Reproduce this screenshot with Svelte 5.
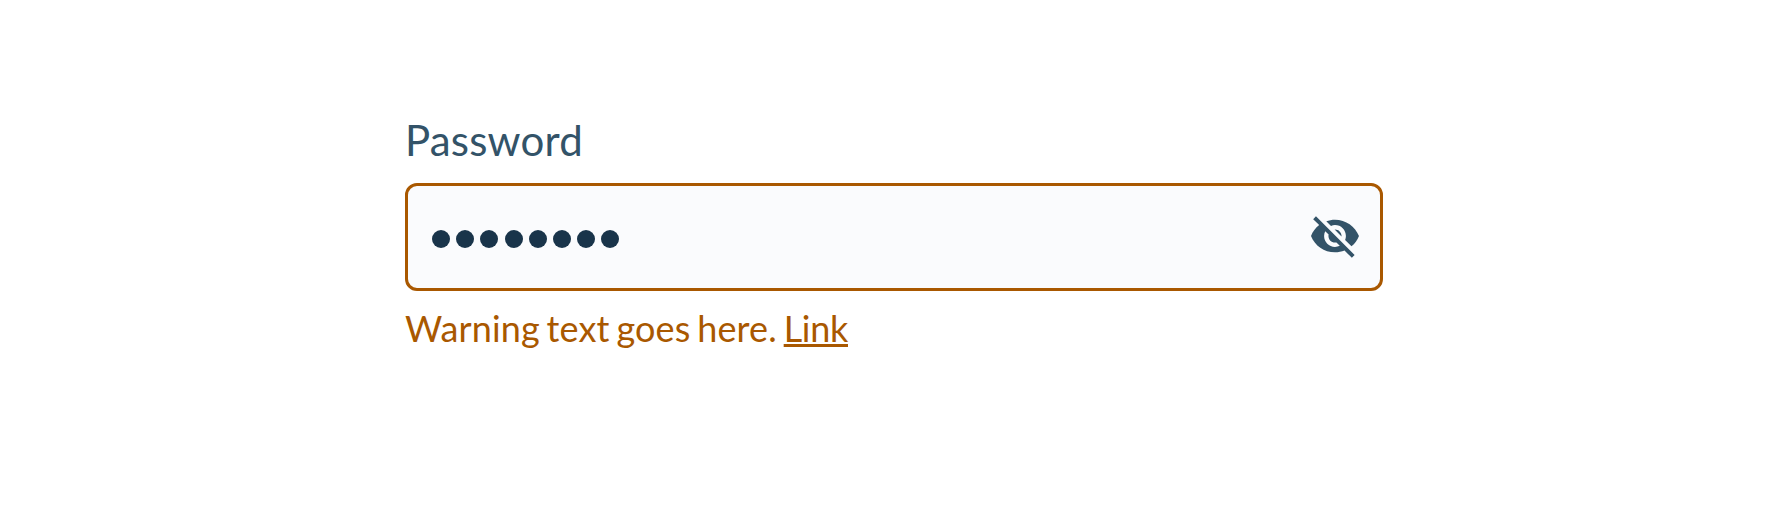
<script>
  let value = $state('12345678');
</script>

<main>
  <div class="field">
    <div class="label">Password</div>
    <div class="control">
      <div class="dots">
        {#each value as _}<span class="dot"></span>{/each}
      </div>
      <svg class="eye" viewBox="1 2.83 22 19.25" aria-hidden="true">
        <path d="M12 7c2.76 0 5 2.24 5 5 0 .65-.13 1.26-.36 1.83l2.92 2.92c1.51-1.26 2.7-2.89 3.43-4.75-1.73-4.39-6-7.5-11-7.5-1.4 0-2.74.25-3.98.7l2.16 2.16C10.74 7.13 11.35 7 12 7zM2 4.27l2.28 2.28.46.46C3.08 8.3 1.78 10.02 1 12c1.73 4.39 6 7.5 11 7.5 1.55 0 3.03-.3 4.38-.84l.42.42L19.73 22 21 20.73 3.27 3 2 4.27zM7.53 9.8l1.55 1.55c-.05.21-.08.43-.08.65 0 1.66 1.34 3 3 3 .22 0 .44-.03.65-.08l1.55 1.55c-.67.33-1.41.53-2.2.53-2.76 0-5-2.24-5-5 0-.79.2-1.53.53-2.2zm4.31-.78l3.15 3.15.02-.16c0-1.66-1.34-3-3-3l-.17.01z" />
      </svg>
    </div>
    <p class="warning">Warning text goes here. <a href="#link">Link</a></p>
  </div>
</main>

<style>
  :global(body) { margin: 0; background: #fff; }
  main { box-sizing: border-box; height: 516px; padding: 115px 405px 0; font-family: Lato, sans-serif; }
  .label { font-size: 42px; line-height: 50px; margin-bottom: 18px; color: #335368; letter-spacing: 0.2px; }
  .control { box-sizing: border-box; height: 108px; border: 3px solid #a95800; border-radius: 12px; background: #fafbfd; display: flex; align-items: center; justify-content: space-between; padding: 0 21px 0 24px; }
  .dots { display: flex; gap: 6.2px; padding-top: 3px; }
  .dot { width: 18px; height: 18px; border-radius: 50%; background: #19344a; }
  .eye { width: 48px; height: 42px; overflow: visible; fill: #335368; }
  .warning { margin: 15px 0 0; font-size: 36px; line-height: 44px; color: #a95800; letter-spacing: 0.15px; word-spacing: -2.6px; }
  a { color: inherit; letter-spacing: -0.3px; text-decoration-thickness: 3px; text-underline-offset: 2px; text-decoration-skip-ink: none; }
</style>
